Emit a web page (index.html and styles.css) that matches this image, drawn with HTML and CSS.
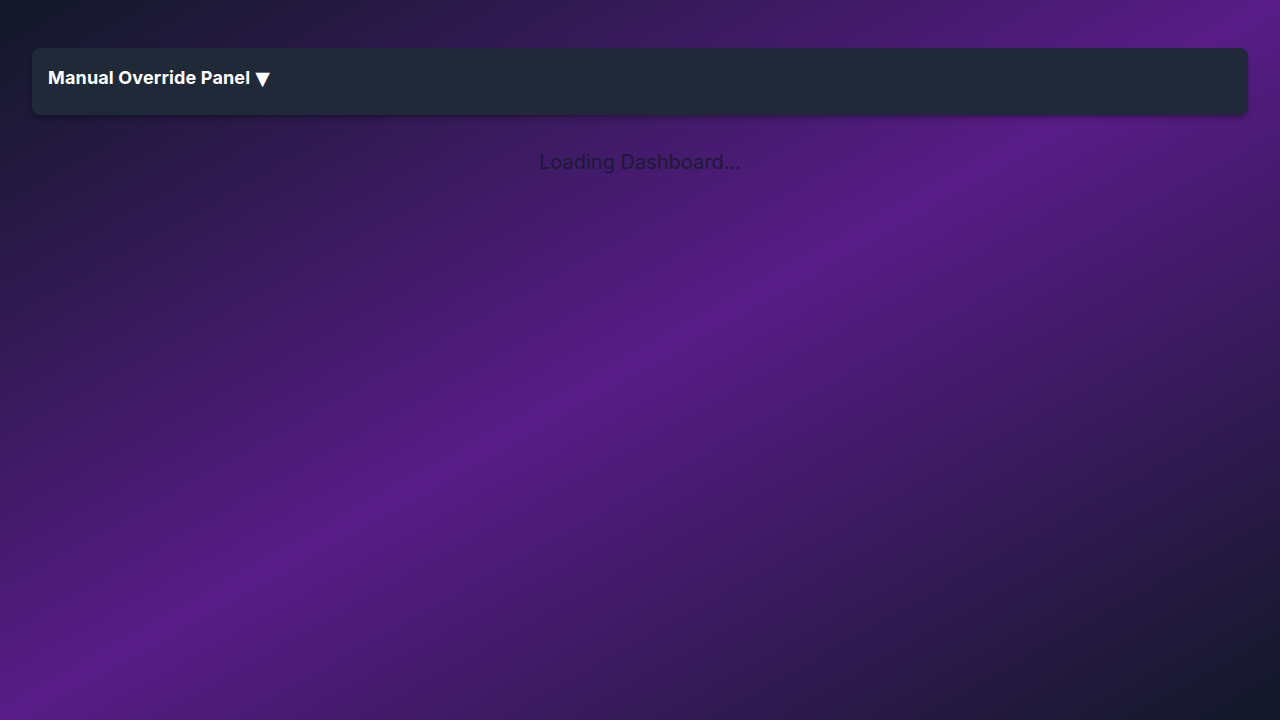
FILE: index.html
```html
<!DOCTYPE html>
<html lang="en">
<head>
<meta charset="utf-8">
<title>Dashboard</title>
<link rel="stylesheet" href="styles.css">
</head>
<body>
<main class="page">
  <section class="panel">
    <h3 class="panel-title">Manual Override Panel <span class="caret">▼</span></h3>
  </section>
  <p class="loading">Loading Dashboard...</p>
</main>
</body>
</html>
```
FILE: styles.css
```css
html, body {
  margin: 0;
  padding: 0;
  height: 100%;
}
body {
  font-family: Inter, "Noto Sans", "Liberation Sans", sans-serif;
  background: linear-gradient(to bottom right, #111827 0%, #581c87 50%, #111827 100%);
  min-height: 720px;
}
.page {
  padding: 48px 32px 32px;
  box-sizing: border-box;
  min-height: 720px;
}
.panel {
  background: #1f2937;
  border-radius: 8px;
  padding: 16px 16px 23px;
  box-shadow: 0 4px 6px -1px rgba(0,0,0,0.25), 0 2px 4px -2px rgba(0,0,0,0.2);
}
.panel-title {
  margin: 0;
  font-size: 18px;
  line-height: 28px;
  font-weight: 700;
  letter-spacing: 0.15px;
  color: #ffffff;
  display: flex;
  align-items: center;
  gap: 5px;
}
.caret {
  font-family: "DejaVu Sans", sans-serif;
  font-size: 19px;
  line-height: 28px;
}
.loading {
  margin: 33px 0 0;
  text-align: center;
  font-size: 20px;
  line-height: 28px;
  color: #1a1a36;
}
```
